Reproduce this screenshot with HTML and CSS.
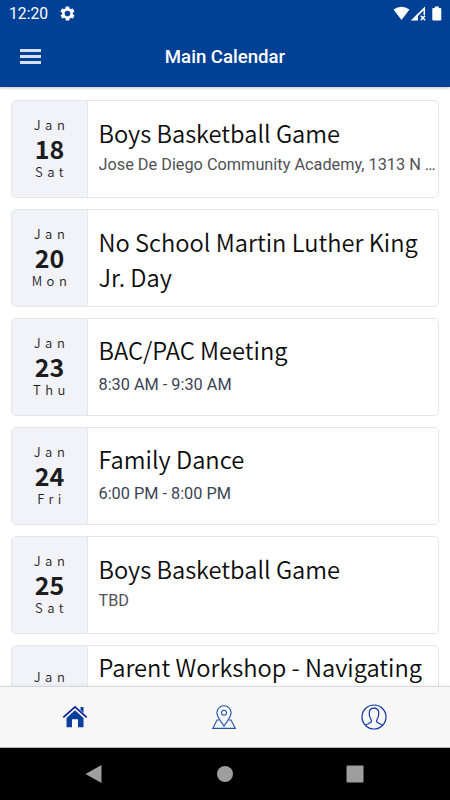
FILE: index.html
```html
<!DOCTYPE html>
<html lang="en">
<head>
    <meta charset="UTF-8">
    <meta name="viewport" content="width=device-width, initial-scale=1">
    <title>Main Calendar</title>
    <link rel="stylesheet" href="styles.css">
</head>
<body>
    <header class="header">
        <div class="status-bar">
            <span class="clock">12:20</span>
            <svg class="gear" width="17" height="17" viewBox="0 0 24 24"><path fill="#fff" d="M19.4 13c0-.3.1-.6.1-1s0-.7-.1-1l2.1-1.6c.2-.2.3-.4.1-.7l-2-3.400c-.1-.2-.4-.3-.6-.2l-2.500 1c-.5-.4-1.100-.7-1.700-1l-.4-2.600c0-.3-.2-.5-.5-.5h-4c-.3 0-.5.2-.5.4l-.4 2.700c-.6.2-1.200.6-1.700 1l-2.500-1c-.2-.1-.5 0-.6.2l-2 3.400c-.1.2-.1.5.1.7L4.600 11c0 .3-.1.700-.1 1s0 .7.1 1l-2.100 1.600c-.2.2-.3.400-.1.700l2 3.400c.1.200.4.300.6.200l2.500-1c.5.400 1.100.700 1.700 1l.4 2.600c0 .3.200.5.5.5h4c.3 0 .5-.2.5-.4l.4-2.700c.6-.2 1.200-.6 1.700-1l2.500 1c.2.100.5 0 .6-.2l2-3.400c.1-.2.100-.5-.1-.7zM12 16a4 4 0 1 1 0-8 4 4 0 0 1 0 8z"/></svg>
            <svg class="signals" width="50" height="16" viewBox="0 0 50 16">
                <path fill="#fff" d="M1.500 3.500Q9.500 -2 17.500 3.500L9.500 14z"/>
                <path fill="#fff" fill-rule="evenodd" d="M18.800 14.500L33 0.500V9h-1.500V4.500L26 10v4.500zM28.200 10.200l1.100-1 1.600 1.600 1.600-1.600 1.100 1-1.600 1.800 1.600 1.700-1.100 1-1.600-1.600-1.600 1.600-1.100-1 1.600-1.700z"/>
                <path fill="#fff" d="M42.800 0.500h4v1.500h1.500q1 0 1 1v10.500q0 1-1 1h-7q-1 0-1-1V3q0-1 1-1h1.500z"/>
            </svg>
        </div>
        <div class="toolbar">
            <div class="menu">
                <span></span>
                <span></span>
                <span></span>
            </div>
            <h1>Main Calendar</h1>
        </div>
    </header>

    <main class="events">
        <div class="card">
            <div class="date"><span>Jan</span><b>18</b><span>Sat</span></div>
            <div class="info">
                <h2>Boys Basketball Game</h2>
                <p class="place">Jose De Diego Community Academy, 1313 N Claremont Ave</p>
            </div>
        </div>
        <div class="card">
            <div class="date"><span>Jan</span><b>20</b><span>Mon</span></div>
            <div class="info info-long">
                <h2>No School Martin Luther King Jr. Day</h2>
            </div>
        </div>
        <div class="card">
            <div class="date"><span>Jan</span><b>23</b><span>Thu</span></div>
            <div class="info">
                <h2>BAC/PAC Meeting</h2>
                <p class="time">8:30 AM - 9:30 AM</p>
            </div>
        </div>
        <div class="card">
            <div class="date"><span>Jan</span><b>24</b><span>Fri</span></div>
            <div class="info">
                <h2>Family Dance</h2>
                <p class="time">6:00 PM - 8:00 PM</p>
            </div>
        </div>
        <div class="card">
            <div class="date"><span>Jan</span><b>25</b><span>Sat</span></div>
            <div class="info">
                <h2>Boys Basketball Game</h2>
                <p class="place">TBD</p>
            </div>
        </div>
        <div class="card">
            <div class="date date-low"><span>Jan</span></div>
            <div class="info info-top">
                <h2>Parent Workshop - Navigating</h2>
            </div>
        </div>
    </main>

    <nav class="tabs">
        <svg width="26" height="26" viewBox="0 0 26 26">
            <path fill="#0a3f9c" d="M18.500 3h3v6l-3-3z"/>
            <path fill="#0a3f9c" d="M13 6.200L21.500 14v9.300H16v-8h-6v8H4.500V14z"/>
            <path fill="none" stroke="#f7f7f7" stroke-width="1" d="M2.300 14.600L13 5l10.700 9.600"/>
            <path fill="none" stroke="#0a1fa0" stroke-width="1.700" d="M1.300 13.400L13 2.800l11.700 10.600"/>
        </svg>
        <svg width="26" height="26" viewBox="0 0 26 26">
            <g fill="none" stroke="#2453a8" stroke-width="1.100">
                <path d="M13 22.300C10.500 17.500 5.900 13.500 5.900 8.800a7.100 7.100 0 0 1 14.200 0c0 4.700-4.600 8.700-7.100 13.500z"/>
                <circle cx="13" cy="8.800" r="2.500"/>
                <path d="M8.500 16H6L1.800 24.400h22.500L20 16h-2.500"/>
            </g>
        </svg>
        <svg width="26" height="26" viewBox="0 0 26 26">
            <g fill="none" stroke="#0a35a0" stroke-width="1.200">
                <circle cx="13" cy="13" r="12"/>
                <path d="M4.300 21.400c1.400-1.600 4.600-1.800 5.700-3.200.7-1 .3-2.400-.2-3.200C8.300 12.800 8 11 8.300 8.300 8.600 5.500 10.200 4.200 13 4.200s4.400 1.300 4.700 4.100c.3 2.700 0 4.500-1.500 6.700-.5.800-.9 2.200-.2 3.200 1.100 1.400 4.300 1.600 5.700 3.200"/>
            </g>
        </svg>
    </nav>

    <div class="system-nav">
        <svg width="18" height="18" viewBox="0 0 18 18"><path fill="#9e9e9e" d="M16.500 0v18L0.500 9z"/></svg>
        <svg width="18" height="18" viewBox="0 0 18 18"><circle fill="#9e9e9e" cx="9" cy="9" r="8"/></svg>
        <svg width="18" height="18" viewBox="0 0 18 18"><rect fill="#9e9e9e" x="0.500" y="0.500" width="17" height="17" rx="1"/></svg>
    </div>
</body>
</html>
```

FILE: styles.css
```css
* {
    box-sizing: border-box;
}

body {
    margin: 0;
    height: 800px;
    display: flex;
    flex-direction: column;
    overflow: hidden;
    background: #fff;
    font-family: Roboto, sans-serif;
}

h1, h2, p {
    margin: 0;
}

svg {
    display: block;
}

.header {
    height: 87px;
    flex: none;
    background: #004196;
    color: #fff;
    box-shadow: 0 1px 3px rgba(0, 0, 0, 0.25);
}

.status-bar {
    height: 27px;
    display: flex;
    align-items: center;
    padding: 0 8px 0 9px;
}

.clock {
    font-size: 15.7px;
    width: 50px;
}

.signals {
    margin-left: auto;
}

.toolbar {
    height: 60px;
    display: grid;
    grid-template-columns: 50px 1fr 50px;
    align-items: center;
}

.toolbar h1 {
    font-size: 18.6px;
    font-weight: 500;
    text-align: center;
}

.menu {
    display: flex;
    flex-direction: column;
    gap: 3px;
    width: 21px;
    margin-left: 20px;
    margin-bottom: 1px;
}

.menu span {
    height: 3px;
    background: #d5dff0;
}

.events {
    flex: 1;
    min-height: 0;
    overflow: hidden;
    padding: 13px 11px 0;
}

.card {
    display: flex;
    height: 98px;
    margin-bottom: 11px;
    border: 1px solid #e4e5e7;
    border-radius: 5px;
    overflow: hidden;
}

.date {
    width: 76px;
    flex: none;
    display: flex;
    flex-direction: column;
    align-items: center;
    padding-top: 13px;
    background: #f2f3f8;
    border-right: 1px solid #e6e7ea;
    color: #1c1c1e;
    font-family: "Noto Sans CJK SC", sans-serif;
}

.date-low {
    padding-top: 20px;
}

.date span {
    font-size: 13px;
    font-weight: 350;
    line-height: 22px;
    letter-spacing: 4.5px;
    margin-right: -4px;
}

.date b {
    font-size: 25px;
    line-height: 25px;
}

.info {
    flex: 1;
    min-width: 0;
    padding-left: 10.5px;
    display: flex;
    flex-direction: column;
    justify-content: center;
}

.info-long {
    padding-top: 3px;
}

.info-top {
    justify-content: flex-start;
    padding-top: 4px;
}

.info h2 {
    font-family: "Noto Sans CJK SC", sans-serif;
    font-size: 23.7px;
    font-weight: 350;
    line-height: 35px;
    color: #0c0c0c;
}

.place {
    font-size: 16.3px;
    line-height: 24px;
    margin-top: 2px;
    margin-bottom: 5px;
    color: #505155;
    white-space: nowrap;
    overflow: hidden;
    text-overflow: ellipsis;
}

.time {
    font-size: 16.3px;
    line-height: 24px;
    margin-top: 5px;
    margin-bottom: 5px;
    color: #3a4354;
}

.tabs {
    height: 62px;
    flex: none;
    display: grid;
    grid-template-columns: repeat(3, 1fr);
    align-items: center;
    justify-items: center;
    padding-right: 1px;
    background: #f7f7f7;
    border-top: 1px solid #d6d6d8;
    border-bottom: 1px solid #b8b8b8;
    box-shadow: 0 -1px 4px rgba(0, 0, 0, 0.06);
}

.system-nav {
    height: 52px;
    flex: none;
    display: flex;
    justify-content: space-between;
    align-items: center;
    padding: 0 86px 0 85px;
    background: #000;
}
```
